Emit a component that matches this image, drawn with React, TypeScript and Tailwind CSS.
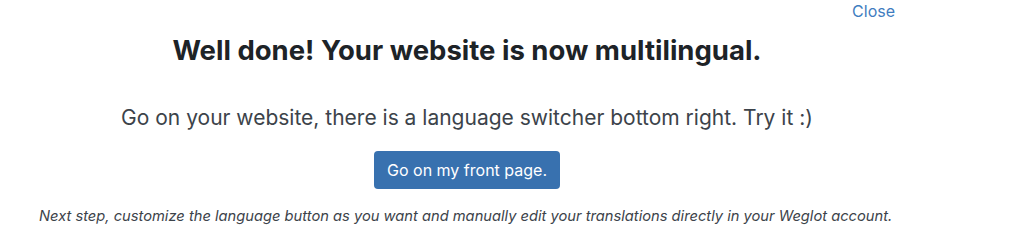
export default function App() {
  return (
    <div
      className="w-[1024px] h-[233px] bg-white overflow-hidden"
      style={{ fontFamily: 'Inter, "Liberation Sans", sans-serif' }}
    >
      <div className="w-[856px] ml-[39px] flex flex-col">
        <div className="flex justify-end h-[21px] pt-[1px]">
          <a className="text-[16px] leading-[20px] text-[#3f7dc0] cursor-pointer">Close</a>
        </div>
        <h1 className="mt-[11px] text-center text-[27.5px] leading-[36px] font-bold text-[#1d2327]">
          Well done! Your website is now multilingual.
        </h1>
        <p className="mt-[36px] text-center text-[21px] leading-[28px] text-[#3c434a]">
          Go on your website, there is a language switcher bottom right. Try it :)
        </p>
        <div className="mt-[19px] flex justify-center">
          <button className="h-[38px] px-[13px] rounded-[4px] bg-[#3871af] text-white text-[16px]">
            Go on my front page.
          </button>
        </div>
        <p className="mt-[17px] text-[14.7px] leading-[20px] italic text-[#3c434a]">
          Next step, customize the language button as you want and manually edit your translations directly in your Weglot account.
        </p>
      </div>
    </div>
  )
}
